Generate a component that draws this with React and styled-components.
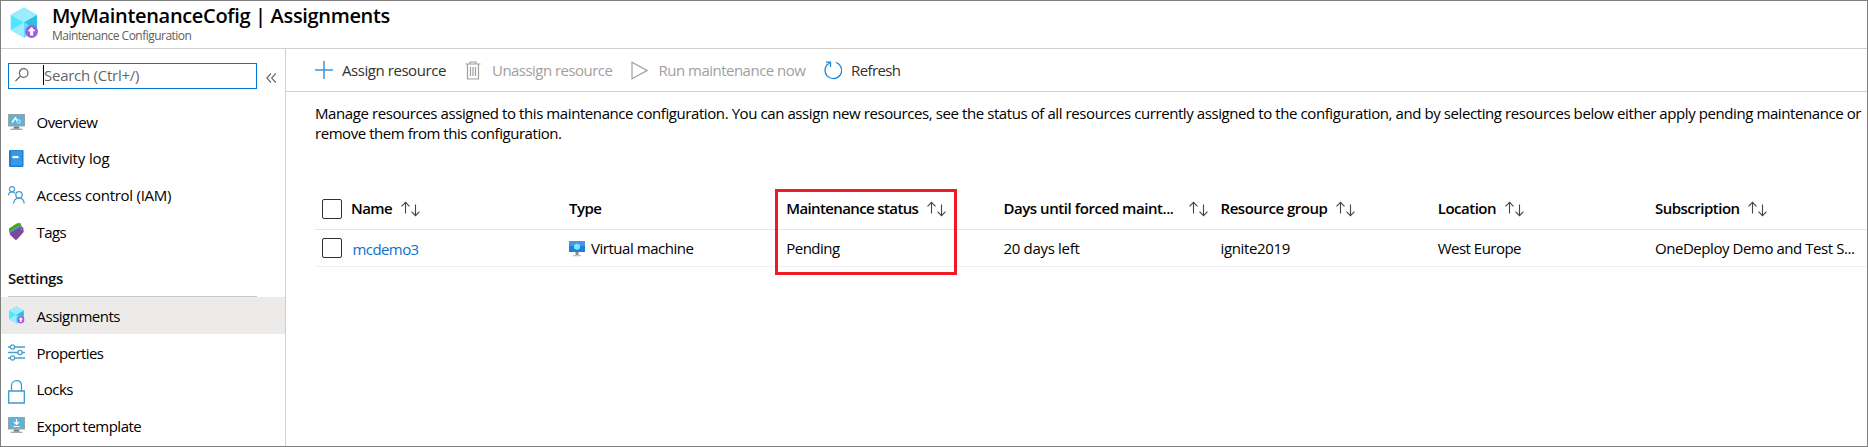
import React from "react";
import styled, { createGlobalStyle } from "styled-components";

const Global = createGlobalStyle`
  * { box-sizing: border-box; }
  html, body { margin: 0; background: #fff; }
  body { font-family: "Open Sans", "Noto Sans", sans-serif; font-size: 15px; line-height: 20px; color: #111; overflow: hidden; }
  svg { display: block; flex: none; }
`;

const Text = styled.span`
  letter-spacing: ${(p) => p.$track ?? -0.5}px;
  white-space: nowrap;
`;

const Window = styled.div`
  position: relative;
  width: 1868px;
  height: 447px;
  border: 1px solid #7f7f7f;
  display: flex;
  flex-direction: column;
  background: #fff;
  overflow: hidden;
`;

const Header = styled.header`
  display: flex;
  height: 48px;
  flex: none;
  padding: 6px 0 0 9px;
  gap: 14px;
  border-bottom: 1px solid #d0d0d0;
`;

const Titles = styled.div`
  display: flex;
  flex-direction: column;
`;

const Title = styled.h1`
  margin: 0;
  height: 20px;
  line-height: 18px;
  font-size: 20px;
  font-weight: 600;
  color: #000;
`;

const Subtitle = styled.div`
  font-size: 12px;
  line-height: 18px;
  color: #605e5c;
`;

const Body = styled.div`
  display: flex;
  flex: 1;
  min-height: 0;
`;

const Sidebar = styled.nav`
  width: 285px;
  flex: none;
  border-right: 1px solid #d0d0d0;
  padding-top: 14px;
`;

const SearchRow = styled.div`
  display: flex;
  align-items: center;
  gap: 9px;
  padding-left: 7px;
  margin-bottom: 15px;
`;

const SearchBox = styled.div`
  width: 249px;
  height: 26px;
  border: 1px solid #0078d4;
  display: flex;
  align-items: center;
  padding: 0 0 2px 6px;
  color: #666;
`;

const Caret = styled.i`
  width: 1px;
  height: 20px;
  margin-left: 14px;
  background: #000;
`;

const Collapse = styled.span`
  padding-top: 3px;
`;

const NavItem = styled.div`
  display: flex;
  align-items: center;
  height: ${(p) => p.$h}px;
  padding-left: 7px;
  gap: 11.5px;
  color: #000;
  background: ${(p) => (p.$active ? "#edebe9" : "transparent")};
`;

const NavLabel = styled(Text)`
  padding-top: ${(p) => (p.$low ? 0.8 : 0)}px;
`;

const Section = styled.div`
  width: 249px;
  margin: 18px 0 0 7px;
  height: 29px;
  border-bottom: 1px solid #c8c8c8;
  font-weight: 600;
`;

const Main = styled.main`
  flex: 1;
  min-width: 0;
  display: flex;
  flex-direction: column;
`;

const Toolbar = styled.div`
  display: flex;
  height: 43px;
  flex: none;
  align-items: center;
  padding-left: 29px;
  border-bottom: 1px solid #d0d0d0;
`;

const Command = styled.div`
  display: flex;
  align-items: center;
  gap: ${(p) => p.$gap}px;
  width: ${(p) => p.$w}px;
  color: ${(p) => (p.$disabled ? "#a19f9d" : "#323130")};
`;

const Intro = styled.p`
  margin: 11px 0 46px 29px;
  color: #000;
`;

const Line = styled.span`
  display: block;
`;

const Row = styled.div`
  display: grid;
  grid-template-columns: 254px repeat(5, 217.2px) 211px;
  margin-left: 29px;
  height: ${(p) => p.$h}px;
  align-items: center;
  border-bottom: 1px solid ${(p) => (p.$head ? "#e6e6e6" : "#f0f0f0")};
  font-weight: ${(p) => (p.$head ? 600 : 400)};
  color: #000;
`;

const Cell = styled.div`
  display: flex;
  align-items: center;
  padding-left: ${(p) => p.$pl ?? 0}px;
  gap: ${(p) => p.$gap ?? 8.5}px;
  color: ${(p) => (p.$link ? "#0f6fc8" : "inherit")};
`;

const HeadLabel = styled(Text)`
  padding-bottom: 2px;
`;

const LinkLabel = styled(Text)`
  padding-top: 2px;
`;

const Check = styled.span`
  width: 20px;
  height: 20px;
  border: 1px solid #323130;
  border-radius: 2px;
  flex: none;
`;

const Highlight = styled.div`
  position: absolute;
  left: 774px;
  top: 188px;
  width: 182px;
  height: 86px;
  border: 3px solid #ed1c24;
`;

const Cube = ({ size = 28, h = 32 }) => (
  <svg width={size} height={h} viewBox="0 0 28 32">
    <path d="M0.7 8 14 0.5 27 8v15L14 30.5.7 23z" fill="#50e6ff" />
    <path d="M.7 8 14 .5 27 8 14 15.5z" fill="#9cebff" />
    <path d="M27 8v15L14 15.5z" fill="#32bedd" />
    <path d="M.7 23 14 15.5v15z" fill="#9cebff" />
    <path d="M14 15.5 27 23 14 30.5z" fill="#50e6ff" />
    <circle cx="21.600" cy="24.500" r="6.400" fill="#a25be8" />
    <path d="M21.600 19.900 25.600 24.200h-2.500v4.400h-3v-4.400h-2.500z" fill="#fff" />
  </svg>
);

const Monitor = ({ children }) => (
  <svg width="17" height="17" viewBox="0 0 17 17">
    <path d="M0 0h17v12.5H0z" fill="#a0a1a2" />
    <path d="M1 1h15v10.500H1z" fill="#59b4d9" />
    <path d="M6 12.5h5l.5 2.2h-6z" fill="#7a7a7a" />
    <path d="M2.500 14.700h12v1.200h-12z" fill="#a0a1a2" />
    {children}
  </svg>
);

const icons = {
  overview: (
    <Monitor>
      <path d="M4 8.500 8 3.2M7.500 4l2 3.200" stroke="#fff" strokeWidth="1.5" fill="none" />
      <circle cx="10.700" cy="7.500" r="1.700" stroke="#d5eef8" fill="none" />
    </Monitor>
  ),
  log: (
    <svg width="17" height="17" viewBox="0 0 17 17">
      <rect x="1" y="0" width="14.500" height="17" rx="1.200" fill="#1b7fd1" />
      <path d="M3 0.500h11v15H3z" fill="#3797e8" />
      <path d="M4.500 6h6v2.200h-6z" fill="#fff" />
    </svg>
  ),
  people: (
    <svg width="17" height="18" viewBox="0 0 17 18" fill="none" stroke="#4a9fc9" strokeWidth="1.3">
      <circle cx="4" cy="3.200" r="2.600" />
      <path d="M.6 9.500C.6 7 2 5.800 4 5.800c1.400 0 2.500.6 3 1.600" />
      <circle cx="11" cy="8.800" r="3.200" />
      <path d="M5.600 17.500c.2-3.400 2.400-5.400 5.400-5.400s5 2 5.200 5.400" />
    </svg>
  ),
  tags: (
    <svg width="17" height="17" viewBox="0 0 17 17">
      <path d="M1 8V5.500L9 0.200 12.500 0 13.300 3 3 10z" fill="#57a300" />
      <path d="M1.300 10V8.200L10 2.500l3.500-.2.800 3.200L4 12z" fill="#3e9fd0" />
      <path d="M2 11.800V10L11 4.500 15.200 4.200 15.700 9 9 16.500 7.500 17z" fill="#804998" />
      <circle cx="13.200" cy="6.200" r="0.700" fill="#b79bc4" />
    </svg>
  ),
  cube: <Cube size={17} h={18} />,
  sliders: (
    <svg width="17" height="17" viewBox="0 0 17 17" stroke="#4a9fc9" strokeWidth="1.3" fill="#fff">
      <path d="M0 3h17M0 8.500h17M0 14h17" />
      <circle cx="4.500" cy="3" r="2.100" />
      <circle cx="12" cy="8.500" r="2.100" />
      <circle cx="4.500" cy="14" r="2.100" />
    </svg>
  ),
  lock: (
    <svg width="17" height="29" viewBox="0 -5 17 29" fill="none" stroke="#3c9bc9" strokeWidth="1.3">
      <path d="M.7 11h15.600v12H.7zM3.500 11V6c0-3.200 2-5.300 5-5.300s5 2.100 5 5.300v5" />
    </svg>
  ),
  exportTpl: (
    <Monitor>
      <path d="M8.500 2v5M6 5 8.500 7.500 11 5M5.500 9.500h6" stroke="#fff" strokeWidth="1.200" fill="none" />
    </Monitor>
  ),
};

const Sort = () => (
  <svg width="19" height="16" viewBox="0 0 19 16" fill="none" stroke="#444" strokeWidth="1.100">
    <path d="M4.500 12.500V1.500M.5 5.300 4.500 1.300 8.500 5.300M14.500 3.500v11M10.500 10.700l4 4 4-4" />
  </svg>
);

const general = [
  ["overview", "Overview", -0.52, 36],
  ["log", "Activity log", -0.16, 36.8],
  ["people", "Access control (IAM)", -0.27, 36.8],
  ["tags", "Tags", -0.6, 36.4],
];
const settings = [
  ["cube", "Assignments", -0.49, 37],
  ["sliders", "Properties", -0.58, 36.7],
  ["lock", "Locks", -0.54, 36.7],
  ["exportTpl", "Export template", -0.52, 36.7],
];

const heads = [
  ["Type", -0.5, false],
  ["Maintenance status", -0.62, true],
  ["Days until forced maint...", -0.44, true, 16],
  ["Resource group", -0.47, true],
  ["Location", -0.5, true],
  ["Subscription", -0.5, true],
];

const values = [
  ["Pending", -0.5],
  ["20 days left", -0.3],
  ["ignite2019", -0.36],
  ["West Europe", -0.52],
  ["OneDeploy Demo and Test S...", -0.44],
];

export default function App() {
  return (
    <Window>
      <Global />
      <Header>
        <Cube />
        <Titles>
          <Title><Text $track={-0.33}>MyMaintenanceCofig | Assignments</Text></Title>
          <Subtitle><Text $track={-0.52}>Maintenance Configuration</Text></Subtitle>
        </Titles>
      </Header>
      <Body>
        <Sidebar>
          <SearchRow>
            <SearchBox>
              <svg width="14" height="14" viewBox="0 0 14 14" fill="none" stroke="#666" strokeWidth="1.200">
                <circle cx="8.700" cy="5" r="4.300" />
                <path d="M5.600 8 .5 13" />
              </svg>
              <Caret />
              <Text $track={-0.26}>Search (Ctrl+/)</Text>
            </SearchBox>
            <Collapse>
              <svg width="11" height="10" viewBox="0 0 11 10" fill="none" stroke="#666" strokeWidth="1.100">
                <path d="M5 .5.800 5 5 9.500M9.800.5 5.600 5l4.200 4.500" />
              </svg>
            </Collapse>
          </SearchRow>
          {general.map(([icon, label, track, h]) => (
            <NavItem key={label} $h={h}>{icons[icon]}<NavLabel $track={track}>{label}</NavLabel></NavItem>
          ))}
          <Section><Text $track={-0.4}>Settings</Text></Section>
          {settings.map(([icon, label, track, h]) => (
            <NavItem key={label} $h={h} $active={icon === "cube"}>
              {icons[icon]}<NavLabel $low $track={track}>{label}</NavLabel>
            </NavItem>
          ))}
        </Sidebar>
        <Main>
          <Toolbar>
            <Command $w={150} $gap={9}>
              <svg width="18" height="18" viewBox="0 0 18 18" stroke="#3a96dd" strokeWidth="1.5"><path d="M9 0v18M0 9h18" /></svg>
              <Text $track={-0.44}>Assign resource</Text>
            </Command>
            <Command $w={166} $gap={11} $disabled>
              <svg width="16" height="19" viewBox="0 0 16 19" fill="none" stroke="#a19f9d" strokeWidth="1.2"><path d="M.5 3h15M5 3V1h6v2M2.500 3v15h11V3M5.500 6v9M8 6v9M10.500 6v9" /></svg>
              <Text $track={-0.54}>Unassign resource</Text>
            </Command>
            <Command $w={192.5} $gap={10.5} $disabled>
              <svg width="17" height="19" viewBox="0 0 17 19" fill="none" stroke="#a19f9d" strokeWidth="1.2"><path d="M1 1.200 16 9.500 1 17.800z" /></svg>
              <Text $track={-0.51}>Run maintenance now</Text>
            </Command>
            <Command $w={100} $gap={9.5}>
              <svg width="18" height="19" viewBox="0 0 18 19" fill="none" stroke="#1b86d8" strokeWidth="1.3"><path d="M12 1.500A8.300 8.300 0 1 1 5.500 2M2 1.200h4.500V6" /></svg>
              <Text $track={-0.6}>Refresh</Text>
            </Command>
          </Toolbar>
          <Intro>
            <Line><Text $track={-0.414}>Manage resources assigned to this maintenance configuration. You can assign new resources, see the status of all resources currently assigned to the configuration, and by selecting resources below either apply pending maintenance or</Text></Line>
            <Line><Text $track={-0.45}>remove them from this configuration.</Text></Line>
          </Intro>
          <Row $head $h={41}>
            <Cell $pl={7} $gap={9}><Check /><HeadLabel $track={-0.6}>Name</HeadLabel><Sort /></Cell>
            {heads.map(([label, track, sortable, gap]) => (
              <Cell key={label} $gap={gap}><HeadLabel $track={track}>{label}</HeadLabel>{sortable && <Sort />}</Cell>
            ))}
          </Row>
          <Row $h={37}>
            <Cell $pl={7} $gap={10.5} $link><Check /><LinkLabel $track={-0.58}>mcdemo3</LinkLabel></Cell>
            <Cell $gap={6}>
              <svg width="16" height="18" viewBox="0 -2 16 18">
                <path d="M0 0h16v11H0z" fill="#1f7fdc" />
                <path d="M0 0h16v5H0z" fill="#4596e8" />
                <path d="M8 2.500 11 4v3.500L8 9 5 7.500V4z" fill="#7fe3f8" />
                <path d="M6.500 11h3v3h-3z" fill="#8a8a8a" />
                <path d="M4 14h8v1.300H4z" fill="#c0c0c0" />
              </svg>
              <Text $track={-0.46}>Virtual machine</Text>
            </Cell>
            {values.map(([label, track]) => (
              <Cell key={label}><Text $track={track}>{label}</Text></Cell>
            ))}
          </Row>
        </Main>
      </Body>
      <Highlight />
    </Window>
  );
}
